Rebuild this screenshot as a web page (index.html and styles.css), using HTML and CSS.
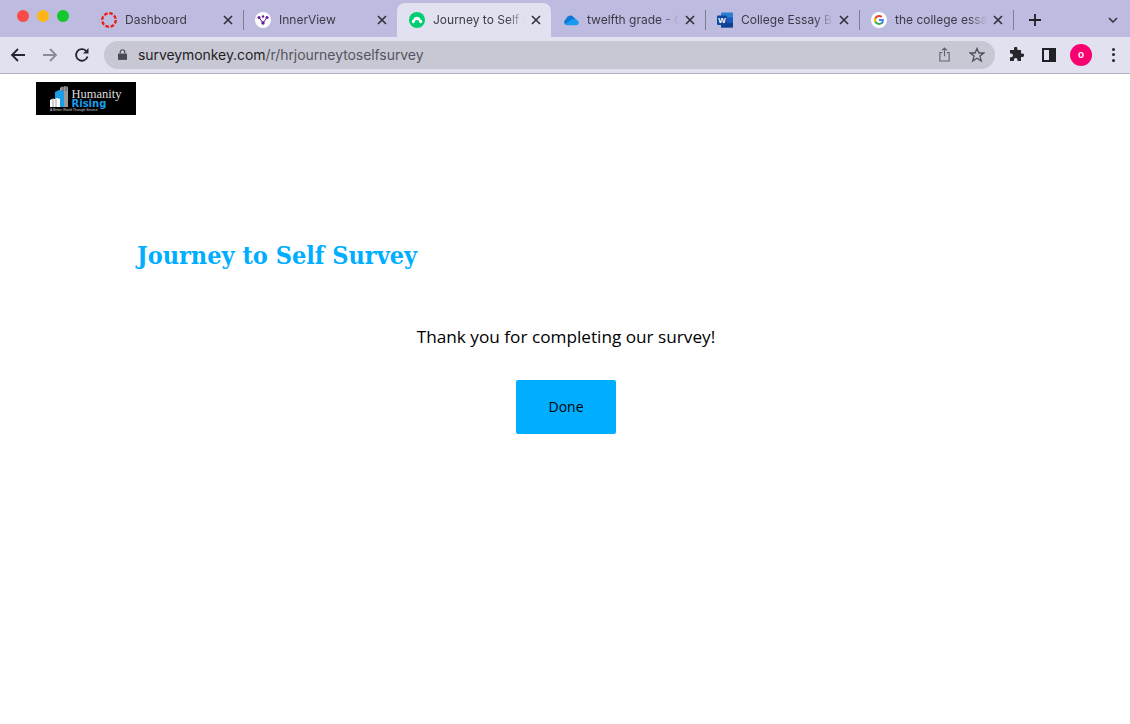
FILE: index.html
```html
<!DOCTYPE html>
<html>
<head>
    <title>Journey to Self Survey</title>
    <link rel="stylesheet" href="styles.css">
</head>
<body>
    <section class="tabstrip">
        <div class="traffic">
            <span class="light red"></span>
            <span class="light yellow"></span>
            <span class="light green"></span>
        </div>
        <div class="tab sep">
            <svg class="favicon" viewBox="0 0 16 16"><circle cx="8" cy="8" r="6.800" fill="none" stroke="#f01a10" stroke-width="2.300" stroke-dasharray="3.600 1.750"/></svg>
            <span class="tabtitle">Dashboard</span>
            <svg class="close" viewBox="0 0 10 10"><path d="M1 1L9 9M9 1L1 9"/></svg>
        </div>
        <div class="tab">
            <svg class="favicon" viewBox="0 0 16 16"><circle cx="8" cy="8" r="8" fill="#fff"/><g fill="#6a1b9a"><circle cx="4" cy="5.500" r="1.500"/><circle cx="12" cy="5.500" r="1.500"/><circle cx="8" cy="4.500" r="1.200"/><circle cx="8" cy="11" r="1.700"/></g><path d="M4 5.500L8 11L12 5.500" fill="none" stroke="#6a1b9a"/></svg>
            <span class="tabtitle">InnerView</span>
            <svg class="close" viewBox="0 0 10 10"><path d="M1 1L9 9M9 1L1 9"/></svg>
        </div>
        <div class="tab active">
            <svg class="favicon" viewBox="0 0 16 16"><circle cx="8" cy="8" r="8" fill="#00ce72"/><path d="M2.800 9.800a2 2 0 0 1 1.700-2.300A3.600 3.600 0 0 1 11.500 7.500a2 2 0 0 1 1.700 2.300a1.500 1.500 0 0 1-2.900.4a2.300 2.300 0 0 0-4.600 0a1.500 1.500 0 0 1-2.900-.4z" fill="#fff"/></svg>
            <span class="tabtitle">Journey to Self S</span>
            <svg class="close" viewBox="0 0 10 10"><path d="M1 1L9 9M9 1L1 9"/></svg>
        </div>
        <div class="tab sep">
            <svg class="favicon" viewBox="0 0 16 16"><path d="M3.500 13a3 3 0 0 1-.6-5.700a4.400 4.400 0 0 1 8-1.700a3.600 3.600 0 0 1 1.800 1.900l-5 3z" fill="#0a78d4"/><path d="M3.500 13.300h9.800a2.600 2.600 0 0 0 .9-5a3.400 3.400 0 0 0-4.500-.9L3 11a1.400 1.400 0 0 0 .5 2.300z" fill="#1a9bf0"/></svg>
            <span class="tabtitle">twelfth grade - O</span>
            <svg class="close" viewBox="0 0 10 10"><path d="M1 1L9 9M9 1L1 9"/></svg>
        </div>
        <div class="tab sep">
            <svg class="favicon" viewBox="0 0 16 16"><rect x="4" y="0.500" width="12" height="15" rx="1" fill="#2b7cd3"/><rect x="4" y="10.500" width="12" height="5" fill="#103f91"/><rect x="4" y="5.500" width="12" height="5" fill="#185abd"/><rect x="0" y="3.500" width="10" height="9.500" rx="1" fill="#11479e"/><text x="5" y="11" class="wordmark">W</text></svg>
            <span class="tabtitle">College Essay B</span>
            <svg class="close" viewBox="0 0 10 10"><path d="M1 1L9 9M9 1L1 9"/></svg>
        </div>
        <div class="tab sep">
            <svg class="favicon" viewBox="0 0 16 16"><circle cx="8" cy="8" r="8" fill="#fff"/><path d="M12.900 8.100c0-.4 0-.7-.1-1H8v1.900h2.800a2.400 2.400 0 0 1-1 1.600v1.300h1.700a5 5 0 0 0 1.400-3.800z" fill="#4285f4"/><path d="M8 13c1.400 0 2.500-.5 3.300-1.200l-1.600-1.300a3 3 0 0 1-4.500-1.600H3.500v1.300A5 5 0 0 0 8 13z" fill="#34a853"/><path d="M5.200 9a3 3 0 0 1 0-2V5.700H3.500a5 5 0 0 0 0 4.500z" fill="#fbbc05"/><path d="M8 5c.8 0 1.400.3 1.900.8l1.500-1.500A5 5 0 0 0 3.500 5.700L5.200 7A3 3 0 0 1 8 5z" fill="#ea4335"/></svg>
            <span class="tabtitle">the college essa</span>
            <svg class="close" viewBox="0 0 10 10"><path d="M1 1L9 9M9 1L1 9"/></svg>
        </div>
        <svg class="newtab" viewBox="0 0 12 12"><path d="M6 0V12M0 6H12"/></svg>
        <svg class="tabmenu" viewBox="0 0 10 6"><path d="M1 1L5 5L9 1"/></svg>
    </section>

    <section class="toolbar">
        <svg class="navicon" viewBox="0 0 16 16"><path d="M15 8H2M8 2L2 8L8 14"/></svg>
        <svg class="navicon disabled" viewBox="0 0 16 16"><path d="M1 8H14M8 2L14 8L8 14"/></svg>
        <svg class="navicon" viewBox="0 0 16 16"><path d="M13.500 9.500A5.800 5.800 0 1 1 12 3.800"/><path class="solid" d="M14.500 1V6.500H9z"/></svg>
        <div class="omnibox">
            <svg class="lock" viewBox="0 0 10 12"><path class="solid" d="M0 5H10V12H0z"/><path d="M2.500 5V3.200a2.500 2.500 0 0 1 5 0V5" fill="none"/></svg>
            <span class="url">surveymonkey.com<span class="urlpath">/r/hrjourneytoselfsurvey</span></span>
            <svg class="share" viewBox="0 0 14 16"><path d="M4.500 6H2V15H12V6H9.500M7 10V1M4.300 3.500L7 1L9.700 3.500"/></svg>
            <svg class="star" viewBox="0 0 16 16"><path d="M8 1.500L9.900 6H14.800L10.900 9.100L12.300 14L8 11.200L3.700 14L5.100 9.100L1.200 6H6.100z"/></svg>
        </div>
        <svg class="puzzle" viewBox="0 0 16 16"><path d="M6 1.500a1.700 1.700 0 0 1 3.400 0V3H13v3.500h1.300a1.800 1.800 0 0 1 0 3.600H13V14H9.500v-1.200a1.800 1.800 0 0 0-3.600 0V14H2v-3.800h1.200a1.800 1.800 0 0 0 0-3.600H2V3h4z"/></svg>
        <div class="sidepanel"></div>
        <div class="avatar">o</div>
        <div class="kebab"><span></span><span></span><span></span></div>
    </section>

    <header class="sitehead">
        <svg class="logo" viewBox="0 0 100 33">
            <rect width="100" height="33" fill="#000"/>
            <path d="M24 25V6l2-1.500 1.500.5 1.500-1 1.500.5 1.500.5V25z" fill="#9a9a9a"/>
            <path d="M19 25V10l4-2 5 1V25z" fill="#1b9ee8"/>
            <path d="M14 25V18l3-1.500 2 .5 2-1 3 1V25z" fill="#fff"/>
            <path d="M17 17V25M20 17V25M27 5V9M30 5V9" stroke="#000" stroke-width="0.400"/>
            <text x="35.500" y="15.500" class="logo1">Humanity</text>
            <text x="35.500" y="25.300" class="logo2">Rising</text>
            <text x="14" y="29.300" class="logo3">A Better World Through Service</text>
        </svg>
    </header>

    <main class="survey">
        <h1>Journey to Self Survey</h1>
        <div class="finish">
            <p>Thank you for completing our survey!</p>
            <button>Done</button>
        </div>
    </main>
</body>
</html>
```

FILE: styles.css
```css
html, body {
    margin: 0;
    height: 100%;
    overflow: hidden;
    background-color: #fff;
}
body {
    font-family: "Inter", "Liberation Sans", sans-serif;
    color: #000;
}

/* browser chrome */
.tabstrip {
    display: flex;
    align-items: center;
    height: 37px;
    background-color: #bdbbdf;
    position: relative;
}
.traffic {
    display: flex;
    gap: 8px;
    width: 72px;
    height: 12px;
    padding-left: 17px;
    margin-top: -6px;
    align-items: center;
}
.light {
    width: 12px;
    height: 12px;
    border-radius: 50%;
}
.red { background-color: #fb4b46; }
.yellow { background-color: #fdb618; }
.green { background-color: #14c72a; }

.tab {
    display: flex;
    align-items: center;
    box-sizing: border-box;
    width: 154px;
    height: 37px;
    padding: 3px 10px 0 12px;
    font-size: 12px;
    color: #3b3b46;
    position: relative;
}
.tab.sep::after {
    content: "";
    position: absolute;
    right: -1px;
    top: 10px;
    height: 20px;
    width: 1px;
    background-color: #7d7c93;
}
.tab.active {
    margin-top: 3px;
    height: 34px;
    padding-top: 0;
    background-color: #e2e1f0;
    border-radius: 8px 8px 0 0;
    color: #3c3c44;
}
.favicon {
    width: 16px;
    height: 16px;
    flex: none;
    margin-right: 8px;
}
.wordmark {
    font-family: "Liberation Sans", sans-serif;
    font-weight: bold;
    font-size: 8px;
    fill: #fff;
    text-anchor: middle;
}
.tabtitle {
    flex: 1;
    line-height: 14px;
    margin-top: -1px;
    white-space: nowrap;
    overflow: hidden;
    -webkit-mask-image: linear-gradient(to right, #000 80%, transparent 100%);
    mask-image: linear-gradient(to right, #000 80%, transparent 100%);
}
.close {
    width: 10px;
    height: 10px;
    flex: none;
    margin-left: 6px;
    fill: none;
    stroke: #2f2f38;
    stroke-width: 1.600;
}
.newtab {
    position: absolute;
    left: 1029px;
    top: 14px;
    width: 12px;
    height: 12px;
    fill: none;
    stroke: #1f1f26;
    stroke-width: 1.800;
}
.tabmenu {
    position: absolute;
    left: 1108px;
    top: 17px;
    width: 10px;
    height: 6px;
    fill: none;
    stroke: #30303a;
    stroke-width: 1.500;
}

.toolbar {
    display: flex;
    align-items: center;
    box-sizing: border-box;
    height: 37px;
    background-color: #e2e1f0;
    border-bottom: 1px solid #b4b3c4;
    padding: 0 0 1px 10px;
}
.navicon {
    width: 16px;
    height: 16px;
    flex: none;
    margin-right: 16px;
    fill: none;
    stroke: #26262c;
    stroke-width: 1.800;
}
.navicon.disabled {
    stroke: #8a8a98;
}
.navicon:nth-child(3) {
    margin-right: 14px;
}
.solid {
    fill: #26262c;
    stroke: none;
}
.omnibox {
    display: flex;
    align-items: center;
    box-sizing: border-box;
    width: 891px;
    height: 28px;
    border-radius: 14px;
    background-color: #c8c8d4;
    padding: 0 10px 0 14px;
    font-size: 14px;
    letter-spacing: -0.07px;
    color: #1f1f26;
}
.lock {
    width: 9px;
    height: 11px;
    flex: none;
    margin-right: 11px;
    stroke: #4a4a55;
    stroke-width: 1.300;
}
.lock .solid {
    fill: #4a4a55;
}
.url {
    flex: 1;
}
.urlpath {
    color: #55555f;
}
.share {
    width: 13px;
    height: 15px;
    flex: none;
    margin-right: 18px;
    fill: none;
    stroke: #62626e;
    stroke-width: 1.200;
}
.star {
    width: 16px;
    height: 16px;
    flex: none;
    fill: none;
    stroke: #50505c;
    stroke-width: 1.300;
}
.puzzle {
    width: 16px;
    height: 16px;
    flex: none;
    margin-left: 13px;
    fill: #26262c;
}
.sidepanel {
    box-sizing: border-box;
    width: 14px;
    height: 14px;
    flex: none;
    margin-left: 18px;
    border: 2px solid #1f1f26;
    border-right-width: 7px;
    background-color: #e2e1f0;
}
.avatar {
    width: 22px;
    height: 22px;
    flex: none;
    margin-left: 14px;
    border-radius: 50%;
    background-color: #f8006f;
    color: #fff;
    font-size: 10px;
    font-weight: 600;
    line-height: 21px;
    text-align: center;
}
.kebab {
    display: flex;
    flex-direction: column;
    gap: 2.500px;
    margin-left: 20px;
}
.kebab span {
    width: 3px;
    height: 3px;
    border-radius: 50%;
    background-color: #26262c;
}

/* page */
.sitehead {
    padding: 8px 0 0 36px;
}
.logo {
    display: block;
    width: 100px;
    height: 33px;
}
.logo1 {
    font-family: "Liberation Serif", serif;
    font-size: 12.500px;
    fill: #ddd;
}
.logo2 {
    font-family: "DejaVu Sans", sans-serif;
    font-weight: bold;
    font-size: 10px;
    fill: #1b9ee8;
}
.logo3 {
    font-family: "Liberation Sans", sans-serif;
    font-size: 3.400px;
    fill: #ccc;
}
.survey h1 {
    margin: 126px 0 0 137px;
    font-family: "DejaVu Serif", serif;
    font-stretch: condensed;
    font-size: 25px;
    font-weight: bold;
    line-height: 30px;
    color: #00aeff;
}
.finish {
    display: flex;
    flex-direction: column;
    align-items: center;
    padding-left: 2px;
    margin-top: 53px;
}
.finish p {
    margin: 0;
    font-family: "Open Sans", sans-serif;
    font-size: 17.200px;
    line-height: 26px;
}
.finish button {
    width: 100px;
    height: 54px;
    margin-top: 30px;
    padding: 0 0 2px;
    border: none;
    border-radius: 2px;
    background-color: #00aeff;
    font-family: "Open Sans", sans-serif;
    font-size: 14px;
    color: #000;
}
```
